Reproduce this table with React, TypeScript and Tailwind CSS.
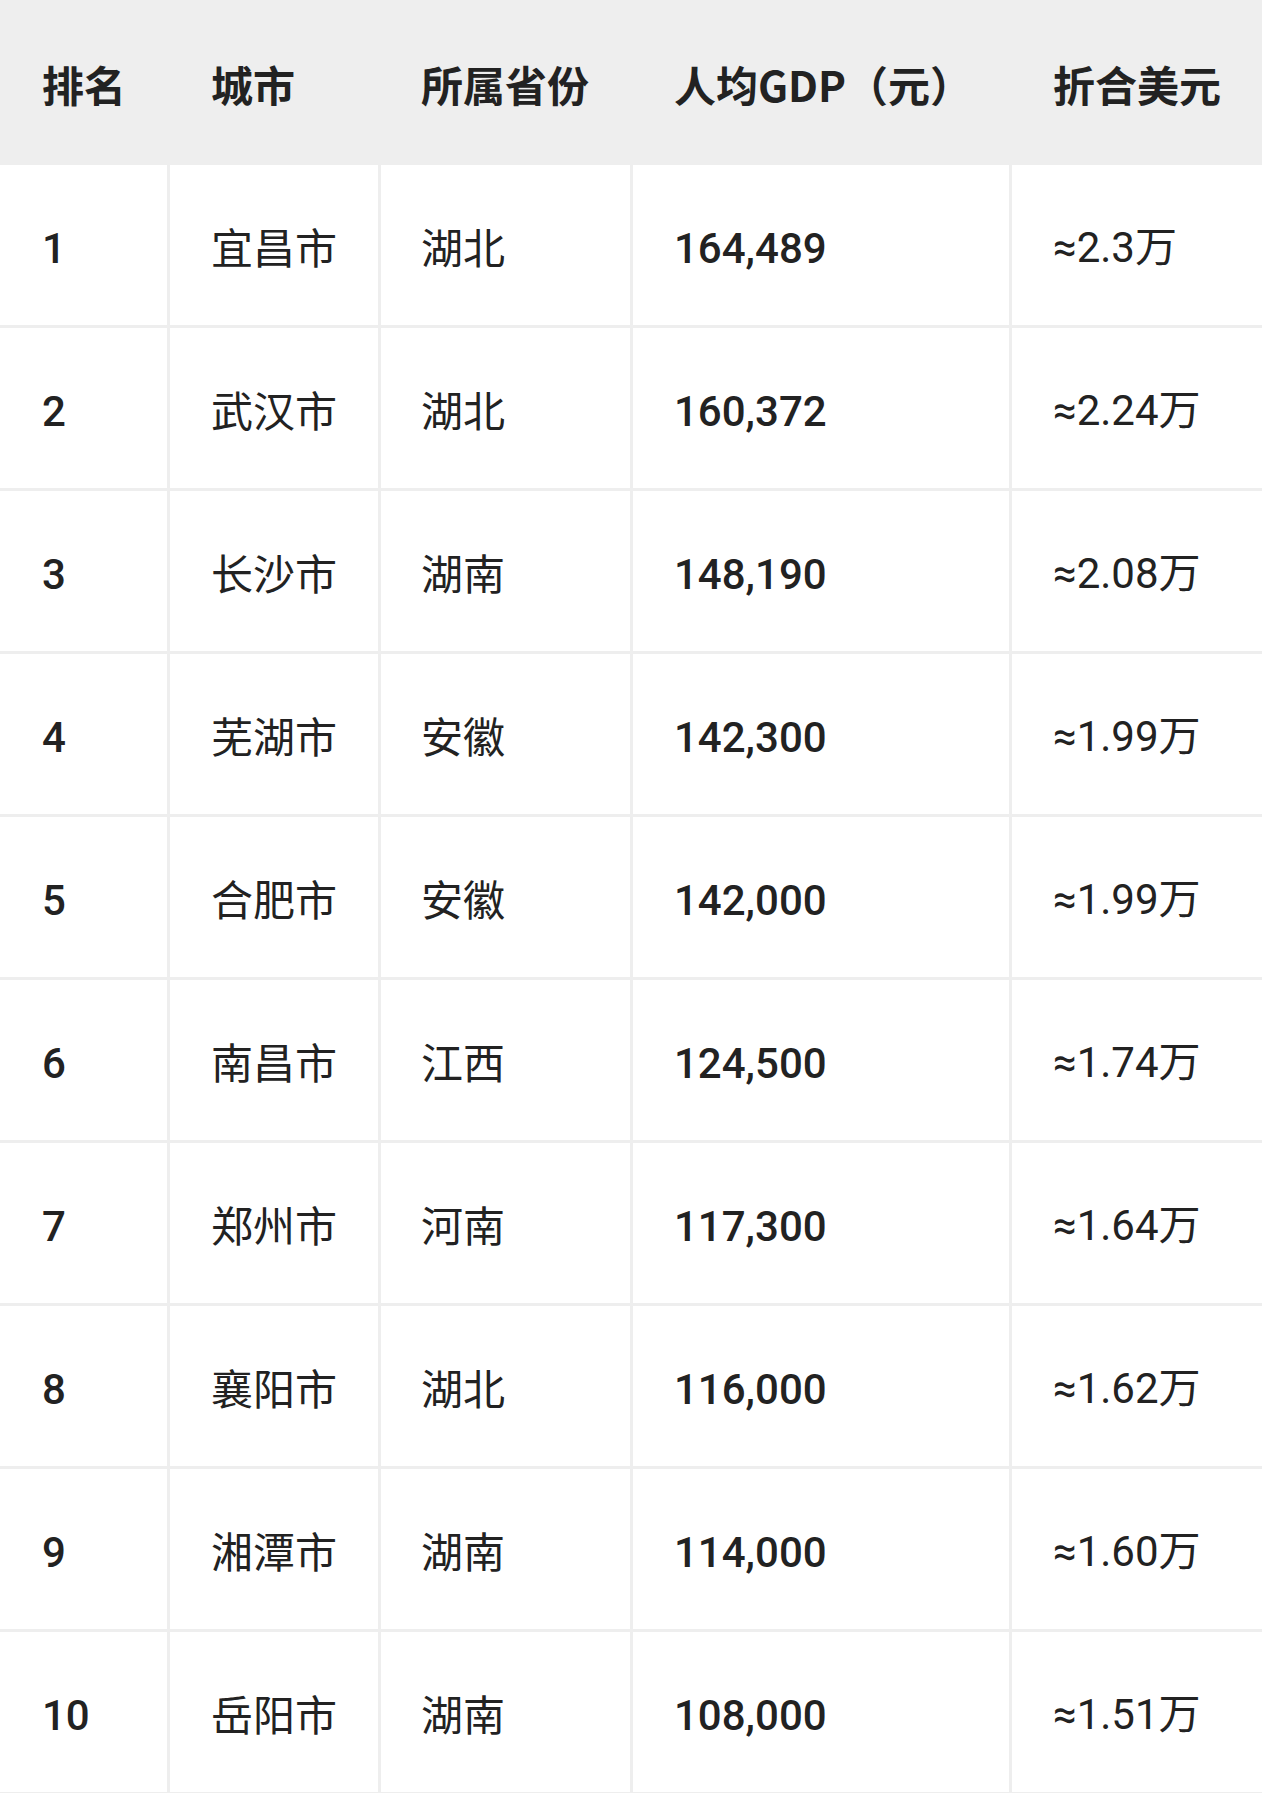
import React from "react";

const rows = [
  ["1", "宜昌市", "湖北", "164,489", "≈2.3万"],
  ["2", "武汉市", "湖北", "160,372", "≈2.24万"],
  ["3", "长沙市", "湖南", "148,190", "≈2.08万"],
  ["4", "芜湖市", "安徽", "142,300", "≈1.99万"],
  ["5", "合肥市", "安徽", "142,000", "≈1.99万"],
  ["6", "南昌市", "江西", "124,500", "≈1.74万"],
  ["7", "郑州市", "河南", "117,300", "≈1.64万"],
  ["8", "襄阳市", "湖北", "116,000", "≈1.62万"],
  ["9", "湘潭市", "湖南", "114,000", "≈1.60万"],
  ["10", "岳阳市", "湖南", "108,000", "≈1.51万"],
];

const cjk = { fontFamily: '"Noto Sans CJK SC", "Noto Sans", sans-serif' };
const num = { fontFamily: 'Roboto, "Noto Sans CJK SC", sans-serif' };

export default function App() {
  return (
    <div className="w-[1262px] bg-white text-[#222222]">
      <div
        className="flex h-[165px] items-center bg-[#eeeeee] pt-[3px] text-[42px] font-bold leading-none"
        style={cjk}
      >
        <div className="w-[170px] pl-[42px]">排名</div>
        <div className="w-[211px] pl-[41px]">城市</div>
        <div className="w-[252px] pl-[40px]">所属省份</div>
        <div className="w-[379px] pl-[41px]">人均GDP（元）</div>
        <div className="flex-1 pl-[41px]">折合美元</div>
      </div>
      {rows.map((r) => (
        <div
          key={r[0]}
          className="flex h-[163px] border-b-[3px] border-[#eeeeee] text-[42px] leading-none"
        >
          <div
            className="flex w-[170px] items-center border-r-[3px] border-[#eeeeee] pl-[42px] pt-[8px] font-medium"
            style={num}
          >
            {r[0]}
          </div>
          <div
            className="flex w-[211px] items-center border-r-[3px] border-[#eeeeee] pl-[41px] pt-[2px]"
            style={cjk}
          >
            {r[1]}
          </div>
          <div
            className="flex w-[252px] items-center border-r-[3px] border-[#eeeeee] pl-[40px] pt-[2px]"
            style={cjk}
          >
            {r[2]}
          </div>
          <div
            className="flex w-[379px] items-center border-r-[3px] border-[#eeeeee] pl-[41px] pt-[8px] font-medium"
            style={num}
          >
            {r[3]}
          </div>
          <div className="flex flex-1 items-center pl-[41px] pt-[6px]" style={num}>
            {r[4]}
          </div>
        </div>
      ))}
    </div>
  );
}
